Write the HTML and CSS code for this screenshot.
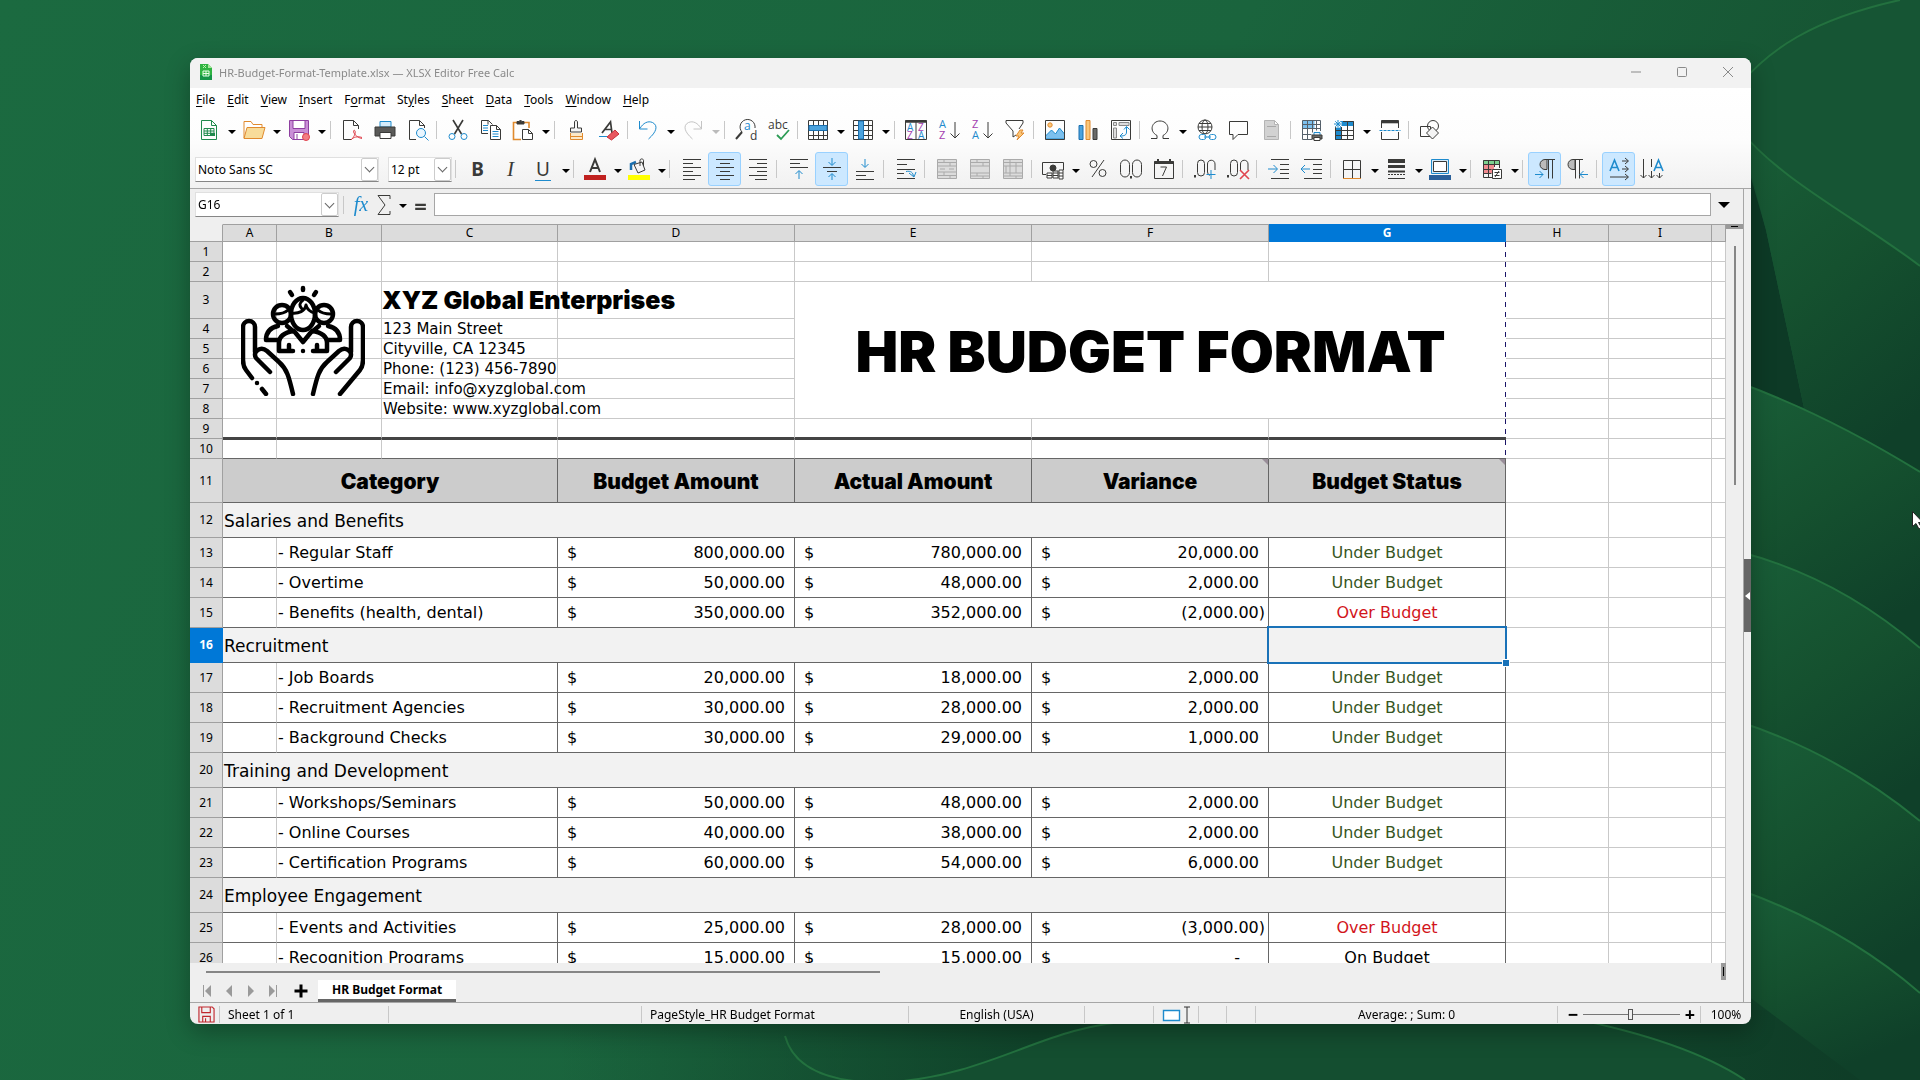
FILE: index.html
```html
<!DOCTYPE html>
<html lang="en">
<head>
  <meta charset="UTF-8" />
  <meta name="viewport" content="width=device-width, initial-scale=1" />
  <title>HR-Budget-Format-Template.xlsx — XLSX Editor Free Calc</title>
  <link rel="stylesheet" href="styles.css">
</head>
<body>
  <svg class="wallpaper" viewBox="0 0 1920 1080" preserveAspectRatio="xMaxYMax slice" aria-hidden="true">
    <defs>
      <linearGradient id="base" x1="0" y1="0" x2="1" y2="0.3"><stop offset="0" stop-color="#1b6a40"/><stop offset="0.6" stop-color="#1a643d"/><stop offset="1" stop-color="#155030"/></linearGradient>
      <linearGradient id="leaf" x1="0" y1="0" x2="0.4" y2="1"><stop offset="0" stop-color="#195e38"/><stop offset="0.5" stop-color="#15512f"/><stop offset="1" stop-color="#0f4029"/></linearGradient>
      <linearGradient id="floor" x1="0" y1="0" x2="1" y2="0"><stop offset="0" stop-color="#10432a" stop-opacity="0"/><stop offset="0.35" stop-color="#10432a"/><stop offset="0.6" stop-color="#134a2e"/><stop offset="1" stop-color="#0e3b26"/></linearGradient>
    </defs>
    <rect width="1920" height="1080" fill="url(#base)"/>
    <path d="M560 1080V1000H1920V1080Z" fill="url(#floor)"/>
    <path d="M1700 130C1751 60 1810 20 1900 0H1920V600H1700Z" fill="#165534"/>
    <path d="M1740 140L1766 230L1804 408L1740 387Z" fill="#0d3a26"/>
    <path d="M1740 130C1780 180 1860 220 1920 266V500L1804 408L1766 230Z" fill="url(#leaf)"/>
    <path d="M1740 383C1800 405 1860 435 1920 472V670H1740Z" fill="url(#leaf)"/>
    <path d="M1740 552C1810 570 1870 605 1920 648V850H1740Z" fill="url(#leaf)"/>
    <path d="M1740 722C1810 745 1870 780 1920 821V1010H1740Z" fill="url(#leaf)"/>
    <path d="M1740 890C1810 915 1870 950 1920 993V1080H1860L1740 990Z" fill="url(#leaf)"/>
    <path d="M870 1082C900 1082 930 1078 960 1070C1030 1050 1060 1026 1140 1020H1570C1630 1030 1700 1050 1745 1080Z" fill="#144e30"/>
    <g fill="none" stroke="#23713f" stroke-width="2">
      <path d="M1740 84C1770 50 1810 20 1900 0"/>
      <path d="M1740 130C1780 180 1860 220 1920 266"/>
      <path d="M1740 383C1800 405 1860 435 1920 472"/>
      <path d="M1740 552C1810 570 1870 605 1920 648"/>
      <path d="M1740 722C1810 745 1870 780 1920 821"/>
      <path d="M1740 890C1810 915 1870 950 1920 993"/>
      <path d="M785 1036C800 1090 890 1090 960 1070C1030 1050 1060 1026 1140 1020"/>
      <path d="M1570 1018C1630 1030 1700 1050 1745 1080"/>
    </g>
  </svg>

  <main class="window">
    <header class="titlebar">
      <svg class="app-icon" viewBox="0 0 14 18"><path d="M1 1h8l4 4v12H1z" fill="#2fb341"/><path d="M9 1l4 4H9z" fill="#a6e99a"/><path d="M1 12h12v5H1z" fill="#159447"/><path d="M4 8h6v5H4zM7 8v5M4 10.500h6" fill="none" stroke="#e8ffe8"/><path d="M4 2l3 3M7 2l-3 3" stroke="#b8f5a8"/></svg>
      <span class="title">HR-Budget-Format-Template.xlsx — XLSX Editor Free Calc</span>
      <div class="win-buttons">
        <button aria-label="Minimize"><svg viewBox="0 0 12 12"><path d="M1 6h10"/></svg></button>
        <button aria-label="Maximize"><svg viewBox="0 0 12 12"><rect x="1.500" y="1.500" width="9" height="9" rx="1"/></svg></button>
        <button aria-label="Close"><svg viewBox="0 0 12 12"><path d="M1 1l10 10M11 1L1 11"/></svg></button>
      </div>
    </header>

    <div class="bars">
      <nav class="menubar">
        <button><u>F</u>ile</button><button><u>E</u>dit</button><button><u>V</u>iew</button><button><u>I</u>nsert</button><button>F<u>o</u>rmat</button><button>St<u>y</u>les</button><button><u>S</u>heet</button><button><u>D</u>ata</button><button><u>T</u>ools</button><button><u>W</u>indow</button><button><u>H</u>elp</button>
      </nav>

      <!-- Standard toolbar -->
      <div class="toolbar standard">
        <button class="tool split" aria-label="New"><svg viewBox="0 0 22 22"><g stroke="#1f8a4c"><path d="M3.500 1.500h10l5 5v14h-15z"/><path d="M13.500 1.500v5h5"/><path d="M6 9.500h10v7H6zM6 12h10M6 14.300h10M9.300 9.500v7M12.700 9.500v7"/></g><path d="M12 14h5v3h-5z" fill="#1f8a4c" stroke="none"/></svg><i class="caret"></i></button>
        <button class="tool split" aria-label="Open"><svg viewBox="0 0 22 22"><path d="M1 19V2.500h7l2 3h9v3" stroke="#e08a2e" fill="#fff"/><path d="M1 19.500L4 8.500h18l-3 11z" fill="#f8dc9a" stroke="#e08a2e"/></svg><i class="caret"></i></button>
        <button class="tool split" aria-label="Save"><svg viewBox="0 0 22 22"><path d="M1.500 1.500h19v19h-16l-3-3z" fill="#c98fd6" stroke="#8e3fa0"/><path d="M5 1.500h12v8H5z" fill="#fff" stroke="#8e3fa0"/><path d="M6 13.500h10v7H6zM9 15v5" fill="#fff" stroke="#8e3fa0"/><circle cx="18" cy="18" r="3.500" fill="#f27d85" stroke="#e0444e"/></svg><i class="caret"></i></button>
        <span class="sep"></span>
        <button class="tool" aria-label="Export as PDF"><svg viewBox="0 0 22 22"><path d="M10 20.500H2.500v-19h10l5 5V10M12.500 1.500v5h5"/><path d="M10 21c3-3 5-7 4-9s-2 0-1 2 4 5 8 5.500M10 21c2-3 7-4 11-2.500" stroke="#e0444e"/></svg></button>
        <button class="tool" aria-label="Print"><svg viewBox="0 0 22 22"><path d="M6 2.500h11V8H6z" fill="#d4ebfa" stroke="#1e8bcd"/><path d="M1 8h20v9H1z" fill="#5a5a58" stroke="#3a3a38"/><path d="M6 13.500h11v6H6z" fill="#fff"/></svg></button>
        <button class="tool" aria-label="Print Preview"><svg viewBox="0 0 22 22"><path d="M9 20.500H2.500v-19h10l5 5V9M12.500 1.500v5h5"/><circle cx="14" cy="14" r="4.500" fill="#e9f6ff" stroke="#1e8bcd"/><path d="M17.500 17.500l4 4" stroke="#1e8bcd"/></svg></button>
        <span class="sep"></span>
        <button class="tool" aria-label="Cut"><svg viewBox="0 0 22 22"><path d="M6 1l8.500 14M16 1L7.500 15" stroke-width="1.600"/><circle cx="5" cy="17.500" r="3" stroke="#1e8bcd"/><circle cx="17" cy="17.500" r="3" stroke="#1e8bcd"/></svg></button>
        <button class="tool" aria-label="Copy"><svg viewBox="0 0 22 22"><path d="M8 14.500H1.500v-13h7l4 4M8 1.500v4"/><path d="M3 6.500h5M3 9h5M3 11.500h5" stroke="#1e8bcd"/><path d="M10.500 6.500h6l4 4v10h-10zM16.500 6.500v4h4" fill="#fff"/><path d="M12.500 12.500h6M12.500 15h6M12.500 17.500h6" stroke="#1e8bcd"/></svg></button>
        <button class="tool split" aria-label="Paste"><svg viewBox="0 0 22 22"><path d="M9 20.500H1.500v-17H5M12 3.500h5V9" stroke="#e08a2e" stroke-width="1.600"/><path d="M5 5V2.500h2L8.500 1 10 2.500h2V5z" fill="#3a3a38"/><path d="M10.500 10.500h6l4 4v6h-10zM16.500 10.500v4h4" fill="#fff"/></svg><i class="caret"></i></button>
        <span class="sep"></span>
        <button class="tool" aria-label="Clone Formatting"><svg viewBox="0 0 22 22"><path d="M9.500 9V3c0-2 3-2 3 0v6h4v4h-11V9z" fill="#f5f5f5"/><path d="M5.500 14v6.500h12V14" fill="#fde9c8" stroke="#e08a2e"/><path d="M5.500 17.500h12" stroke="#e08a2e"/></svg></button>
        <button class="tool" aria-label="Clear Formatting"><svg viewBox="0 0 22 22"><path d="M4 14L12.500 3 14 14M7 10.500h6.500" stroke-width="1.700"/><path d="M1 17.500h8" stroke="#1e8bcd"/><path d="M9 18l8-7 4 4-7.500 6z" fill="#e8575f" stroke="#c9333c"/></svg></button>
        <span class="sep"></span>
        <button class="tool split" aria-label="Undo"><svg viewBox="0 0 22 22"><path d="M2.500 2v8h8M3 9.500C6 4 11 1.500 15.500 3.500c6 3 4 9.500-4 16.500" stroke="#1e8bcd"/></svg><i class="caret"></i></button>
        <button class="tool split" disabled aria-label="Redo"><svg viewBox="0 0 22 22"><path d="M19.500 2v8h-8M19 9.500C16 4 11 1.500 6.500 3.500c-6 3-4 9.500 4 16.500" stroke="#c4c4c4"/></svg><i class="caret"></i></button>
        <span class="sep"></span>
        <button class="tool" aria-label="Find and Replace"><svg viewBox="0 0 22 22"><path d="M7 13A7.500 7.500 0 1 1 20 9"/><path d="M7 13l-6 7" stroke-width="2"/><text x="9" y="11" class="glyph blue">a</text><text x="15" y="21" class="glyph">d</text></svg></button>
        <button class="tool" aria-label="Spelling"><svg viewBox="0 0 22 22"><text x="0" y="10" class="glyph">abc</text><path d="M9 16l4 4 8-9" stroke="#2c9c55" stroke-width="1.800"/></svg></button>
        <span class="sep"></span>
        <button class="tool split" aria-label="Row"><svg viewBox="0 0 22 22"><path d="M1.500 1.500h19v19h-19zM1.500 6.500h19M1.500 11.500h19M1.500 16.500h19M6.500 1.500v19M11.500 1.500v19M16.500 1.500v19"/><path d="M2 6.500h18v5H2z" fill="#4ba3de" stroke="#1b6fae"/></svg><i class="caret"></i></button>
        <button class="tool split" aria-label="Column"><svg viewBox="0 0 22 22"><path d="M1.500 1.500h19v19h-19zM1.500 6.500h19M1.500 11.500h19M1.500 16.500h19M6.500 1.500v19M11.500 1.500v19M16.500 1.500v19"/><path d="M6.500 2h5v18h-5z" fill="#4ba3de" stroke="#1b6fae"/></svg><i class="caret"></i></button>
        <span class="sep"></span>
        <button class="tool" aria-label="Sort"><svg viewBox="0 0 22 22"><path d="M.5 1.500h21v19H.5zM11 2v18"/><path d="M.5 2.500h21" stroke-width="2.500"/><text x="2" y="12" class="mini blue">A</text><text x="2" y="20" class="mini purple">Z</text><text x="13" y="12" class="mini purple">Z</text><text x="13" y="20" class="mini blue">A</text></svg></button>
        <button class="tool" aria-label="Sort Ascending"><svg viewBox="0 0 22 22"><text x="1" y="9" class="small blue">A</text><text x="1" y="20" class="small purple">Z</text><path d="M17 3v16M12.500 14.500L17 19l4.500-4.500"/></svg></button>
        <button class="tool" aria-label="Sort Descending"><svg viewBox="0 0 22 22"><text x="1" y="9" class="small purple">Z</text><text x="1" y="20" class="small blue">A</text><path d="M17 3v16M12.500 14.500L17 19l4.500-4.500"/></svg></button>
        <button class="tool" aria-label="AutoFilter"><svg viewBox="0 0 22 22"><path d="M9 18v-6L2 4V1.500h17V4l-4 6M9 18l3-2"/><path d="M16 11l-4 6h3l-2 4 7-7h-3l2-3z" fill="#fbc77a" stroke="#e08a2e"/></svg></button>
        <span class="sep"></span>
        <button class="tool" aria-label="Insert Image"><svg viewBox="0 0 22 22"><path d="M1.500 20V17l6-6 4 4 4-6 5 6v5z" fill="#7cc0ee" stroke="#1e8bcd"/><circle cx="6" cy="6" r="2.200" fill="#fbc77a" stroke="#e08a2e"/><path d="M1.500 1.500h19v19h-19z"/></svg></button>
        <button class="tool" aria-label="Insert Chart"><svg viewBox="0 0 22 22"><path d="M2 6.500h4v14H2z" fill="#4ba3de" stroke="#1b6fae"/><path d="M9 1.500h4v19H9z" fill="#fbc77a" stroke="#e08a2e"/><path d="M16 9.500h4v11h-4z" fill="#6a6a68"/></svg></button>
        <button class="tool" aria-label="Pivot Table"><svg viewBox="0 0 22 22"><path d="M1.500 1.500h19v19h-19z"/><path d="M3.500 3.500h3v3h-3zM9 3.500h10v3H9zM3.500 9h3v10h-3z" fill="#ddd" stroke="#888"/><path d="M16.500 8v5c0 3-2 4-6 4M14 10.500l2.500-3 3 3M13 14l-3 3 3 2.500" stroke="#1e8bcd"/></svg></button>
        <span class="sep"></span>
        <button class="tool split" aria-label="Special Character"><svg viewBox="0 0 22 22"><path d="M2 19.500h6v-3C-.5 12 3 2 11 2s11.500 10 3 14.500v3h6"/></svg><i class="caret"></i></button>
        <button class="tool" aria-label="Hyperlink"><svg viewBox="0 0 22 22"><circle cx="10" cy="8" r="7"/><ellipse cx="10" cy="8" rx="3" ry="7"/><path d="M3 8h14M4 4.500h12M4 11.500h12"/><path d="M4 15.500h15v5H4z" fill="#fff" stroke="none"/><rect x="4" y="15.500" width="7" height="5" rx="2.500" stroke="#1e8bcd"/><rect x="14" y="15.500" width="7" height="5" rx="2.500" stroke="#1e8bcd"/><path d="M9 18h7" stroke="#1e8bcd"/></svg></button>
        <button class="tool" aria-label="Comment"><svg viewBox="0 0 22 22"><path d="M1.500 2.500h18v13H10l-5 5v-5H1.500z"/></svg></button>
        <button class="tool" disabled aria-label="Headers and Footers"><svg viewBox="0 0 22 22"><path d="M3.500 1.500h10l4 4v15h-14zM13.500 1.500v4h4" fill="#d2d2d2" stroke="#b4b4b4"/><path d="M6 7.500h9M6 17.500h9" stroke="#a8a8a8"/></svg></button>
        <span class="sep"></span>
        <button class="tool" aria-label="Define Print Area"><svg viewBox="0 0 22 22"><path d="M1.500 1.500h12v8h-12z" fill="#7cc0ee" stroke="none"/><path d="M11 20.500H1.500v-19h18V12M1.500 5.500h18M1.500 9.500h18M1.500 15.500h9M6.500 1.500v19M11.500 1.500v12M15.500 1.500v10" stroke="#55606a"/><path d="M13 13.500h6v3h-6z" fill="#e9f6ff" stroke="#1e8bcd"/><path d="M11 16h10v4H11z" fill="#6a6a68"/><path d="M13 18.500h6v3h-6z" fill="#fff"/></svg></button>
        <button class="tool split" aria-label="Freeze"><svg viewBox="0 0 22 22"><path d="M2 2h19v5H8v14H2z" fill="#1e8bcd" stroke="none"/><path d="M2.500 7v13.500h18v-18H10M2.500 11.500h18M2.500 16.500h18M8.500 8v13M14.500 2.500V21"/><path d="M5 1v8M1 5h8M2.300 2.300l5.500 5.500M7.800 2.300L2.300 7.800" stroke="#fff" stroke-width="2.500"/><path d="M5 1v8M1 5h8M2.300 2.300l5.500 5.500M7.800 2.300L2.300 7.800" stroke="#1e8bcd"/></svg><i class="caret"></i></button>
        <button class="tool" aria-label="Split Window"><svg viewBox="0 0 22 22"><path d="M2.500 9V1.500h17V9M2.500 13v7.500h17V13"/><path d="M2.500 3h17" stroke-width="2.600"/><path d="M.5 11.500h21" stroke="#1e8bcd" stroke-dasharray="3 1"/></svg></button>
        <span class="sep"></span>
        <button class="tool" aria-label="Show Draw Functions"><svg viewBox="0 0 22 22"><circle cx="14" cy="7" r="5.500"/><path d="M1.500 7.500h10v10h-10z"/><path d="M13.500 8l6 6-6 6-6-6z" fill="#f4f4f4"/></svg></button>
      </div>

      <!-- Formatting toolbar -->
      <div class="toolbar formatting">
        <label class="combo font-name"><select aria-label="Font Name"><option>Noto Sans SC</option></select><span class="drop"></span></label>
        <label class="combo font-size"><select aria-label="Font Size"><option>12 pt</option></select><span class="drop"></span></label>
        <span class="sep"></span>
        <button class="tool letter bold">B</button>
        <button class="tool letter italic">I</button>
        <button class="tool split letter underline" aria-label="Underline"><span>U</span><i class="caret"></i></button>
        <span class="sep"></span>
        <button class="tool split" aria-label="Font Color"><svg viewBox="0 0 22 22"><path d="M6 14L11 1.500 16 14M7.500 10h7" stroke-width="2"/><path d="M0 19.500h22" stroke="#c0211f" stroke-width="5"/></svg><i class="caret"></i></button>
        <button class="tool split" aria-label="Background Color"><svg viewBox="0 0 22 22"><path d="M3 12V6l5-2" stroke="#1b6fae" stroke-width="2.500"/><path d="M6 6.500l8-2.500 3 8-7 3zM12 8V2c1-2 4-1 3.500 1V8"/><path d="M0 19.500h22" stroke="#ffff00" stroke-width="5"/></svg><i class="caret"></i></button>
        <span class="sep"></span>
        <button class="tool" aria-label="Align Left"><svg viewBox="0 0 22 22"><path d="M2 1.500h18M2 5.500h10M2 9.500h18M2 13.500h10M2 17.500h18M2 21.500h12"/></svg></button>
        <button class="tool on" aria-label="Center Horizontally"><svg viewBox="0 0 22 22"><path d="M2 1.500h18M6 5.500h10M2 9.500h18M6 13.500h10M2 17.500h18M6 21.500h10"/></svg></button>
        <button class="tool" aria-label="Align Right"><svg viewBox="0 0 22 22"><path d="M2 1.500h18M10 5.500h10M2 9.500h18M10 13.500h10M2 17.500h18M8 21.500h12"/></svg></button>
        <span class="sep"></span>
        <button class="tool" aria-label="Align Top"><svg viewBox="0 0 22 22"><path d="M2 1.500h18M2 5.500h10M2 9.500h18"/><path d="M11 21v-8M7.500 16l3.500-3.500 3.500 3.500" stroke="#1e8bcd"/></svg></button>
        <button class="tool on" aria-label="Center Vertically"><svg viewBox="0 0 22 22"><path d="M2 9.500h18M6 13.500h10"/><path d="M11 0v7M7.500 4L11 7.500 14.500 4M11 22v-6M7.500 19L11 15.500l3.500 3.500" stroke="#1e8bcd"/></svg></button>
        <button class="tool" aria-label="Align Bottom"><svg viewBox="0 0 22 22"><path d="M2 13.500h18M2 17.500h10M2 21.500h18"/><path d="M11 1v8M7.500 6L11 9.500 14.500 6" stroke="#1e8bcd"/></svg></button>
        <span class="sep"></span>
        <button class="tool" aria-label="Wrap Text"><svg viewBox="0 0 22 22"><path d="M2 1.500h18M2 6.500h10M2 11.500h18M2 15.500h7M2 20.500h18"/><path d="M11 13.500c5-1 7 1 7.500 5M14 15l5 4 2-5" stroke="#1e8bcd"/></svg></button>
        <span class="sep"></span>
        <button class="tool" disabled aria-label="Merge and Center"><svg viewBox="0 0 22 22"><path d="M1.500 1.500h19v19h-19z" fill="#dcdcdc" stroke="#aaa"/><path d="M1.500 4.500h19M1.500 8h19M1.500 14h19M1.500 17.500h19M8 1.500v3M14 4.500V8M8 14v3M14 17v3M4 11h5M13 11h5" stroke="#aaa"/></svg></button>
        <button class="tool" disabled aria-label="Merge Cells"><svg viewBox="0 0 22 22"><path d="M1.500 1.500h19v19h-19z" fill="#dcdcdc" stroke="#aaa"/><path d="M1.500 4.500h19M1.500 8h19M1.500 15h19M1.500 18h19M8 1.500V5M14 4.500V8M8 15v3M14 18v3" stroke="#aaa"/></svg></button>
        <button class="tool" disabled aria-label="Split Cells"><svg viewBox="0 0 22 22"><path d="M1.500 1.500h19v19h-19z" fill="#dcdcdc" stroke="#aaa"/><path d="M1.500 4.500h19M1.500 8h19M1.500 15h19M1.500 18h19M8 1.500V15M14 4.500V15M8 15v3M14 18v3M4 8v7" stroke="#aaa"/></svg></button>
        <span class="sep"></span>
        <button class="tool split" aria-label="Format as Currency"><svg viewBox="0 0 22 22"><path d="M4 16.500H.500v-12h21V12"/><circle cx="11" cy="10" r="3" fill="#3a3a38"/><path d="M5 15h5v5H5zM5 17.500h5M11 13h5v7h-5zM11 15h5M11 17.500h5M17 12h4v9h-4zM17 15h4M17 18h4" fill="#fff"/></svg><i class="caret"></i></button>
        <button class="tool" aria-label="Format as Percent"><svg viewBox="0 0 22 22"><circle cx="6.500" cy="6" r="3.500"/><circle cx="15.500" cy="15" r="3.500"/><path d="M17 2L5 19"/></svg></button>
        <button class="tool" aria-label="Format as Number"><svg viewBox="0 0 22 22"><rect x="0.500" y="2" width="9" height="17" rx="4.500"/><rect x="12.500" y="2" width="9" height="17" rx="4.500"/><path d="M11 18v2.500" stroke-width="2"/></svg></button>
        <button class="tool" aria-label="Format as Date"><svg viewBox="0 0 22 22"><path d="M1.500 3.500h19v17h-19z"/><path d="M1.500 4.500h19" stroke-width="3"/><path d="M5 1v3M17 1v3" stroke-width="2"/><path d="M7.500 9h6l-4 9"/></svg></button>
        <span class="sep"></span>
        <button class="tool" aria-label="Add Decimal Place"><svg viewBox="0 0 22 22"><path d="M1 17v2.500" stroke-width="2"/><rect x="3.500" y="2" width="7" height="16" rx="3.500"/><path d="M13.500 14V6c0-5 7.500-5 7.500 0v6M13.500 14q.5 3 2 3.500"/><path d="M17 12v9M12.500 16.500h9" stroke="#1e8bcd"/></svg></button>
        <button class="tool" aria-label="Delete Decimal Place"><svg viewBox="0 0 22 22"><path d="M1 17v2.500" stroke-width="2"/><rect x="3.500" y="2" width="7" height="16" rx="3.500"/><path d="M13.500 12V6c0-5 7.500-5 7.500 0v6"/><path d="M13 12l9 9M22 12l-9 9" stroke="#e0444e" stroke-width="1.600"/></svg></button>
        <span class="sep"></span>
        <button class="tool" aria-label="Increase Indent"><svg viewBox="0 0 22 22"><path d="M3 1.500h18M12 6.500h9M12 11.500h9M12 15.500h9M3 20.500h18"/><path d="M0 11h9M5.500 7L9.500 11l-4 4" stroke="#1e8bcd"/></svg></button>
        <button class="tool" aria-label="Decrease Indent"><svg viewBox="0 0 22 22"><path d="M3 1.500h18M12 6.500h9M12 11.500h9M12 15.500h9M3 20.500h18"/><path d="M0 11h9M4 7L0 11l4 4" stroke="#1e8bcd"/></svg></button>
        <span class="sep"></span>
        <button class="tool split" aria-label="Borders"><svg viewBox="0 0 22 22"><path d="M2.500 20V2.500h17V20M11.500 2.500V20M2.500 11.500h17"/><path d="M2 20.500h18" stroke="#e08a2e"/></svg><i class="caret"></i></button>
        <button class="tool split" aria-label="Border Style"><svg viewBox="0 0 22 22"><path d="M3 3h17" stroke-width="4"/><path d="M3 8.500h17" stroke-width="3"/><path d="M3 13.500h17" stroke-width="2"/><path d="M3 16.500h17" stroke-dasharray="2 1"/><path d="M3 20.500h17"/></svg><i class="caret"></i></button>
        <button class="tool split" aria-label="Border Color"><svg viewBox="0 0 22 22"><path d="M2.500 1.500h17v14h-17z" stroke="#1e8bcd" fill="#d4ebfa"/><path d="M4.500 3.500h13v10h-13z" fill="#fff"/><path d="M0 19.500h22" stroke="#2a6099" stroke-width="5"/></svg><i class="caret"></i></button>
        <span class="sep"></span>
        <button class="tool split" aria-label="Conditional"><svg viewBox="0 0 22 22"><path d="M2 2h16v5H2z" fill="#7cd08f" stroke="none"/><path d="M2 7h11v8H2z" fill="#f08a8f" stroke="none"/><path d="M11 19.500H2.500v-17h16V10M2.500 6.500h16M2.500 11.500h8M2.500 15.500h8M7.500 2.500v17M13.500 2.500V9"/><path d="M11.500 11.500h9v9h-9z" fill="#fff"/><path d="M13.500 14.500h5M13.500 17.500h5M18 13l-4 6"/></svg><i class="caret"></i></button>
        <span class="sep"></span>
        <button class="tool on" aria-label="Left-To-Right"><svg viewBox="0 0 22 22"><path d="M13 1.500v10H11a5 5 0 0 1 0-10z" fill="#bbb"/><path d="M11 1.500h10M14.500 1.500v19M18.500 1.500v19"/><path d="M1 16.500h8M5.500 13L9 16.500 5.500 20" stroke="#1e8bcd"/></svg></button>
        <button class="tool" aria-label="Right-To-Left"><svg viewBox="0 0 22 22"><path d="M8 1.500v10H6a5 5 0 0 1 0-10z" fill="#bbb"/><path d="M6 1.500h10M8.500 1.500v19M12.500 1.500v19"/><path d="M13 16.500h8M16.500 13L13 16.500l3.500 3.500" stroke="#1e8bcd"/></svg></button>
        <span class="sep"></span>
        <button class="tool on" aria-label="Text direction left to right"><svg viewBox="0 0 22 22"><path d="M2 13L6.500 2 11 13M3.500 9.500h6" stroke="#1e8bcd" stroke-width="1.600"/><path d="M14 3h6M17 0l3.500 3L17 6M14 11h6M17 8l3.500 3-3.500 3M2 19h18M17 16l3.500 3-3.500 3"/></svg></button>
        <button class="tool" aria-label="Text direction top to bottom"><svg viewBox="0 0 22 22"><path d="M13 13L17.500 2 22 13M14.500 9.500h6" stroke="#1e8bcd" stroke-width="1.600"/><path d="M2.500 1v19M-.5 17l3 3 3-3M10.500 1v8M10.500 13v7M7.500 17l3 3 3-3M18.500 15v5M15.500 17l3 3 3-3"/></svg></button>
      </div>
    </div>

    <div class="workspace">
      <div class="document">
        <div class="formula-bar">
          <div class="combo name-box"><input type="text" value="G16" aria-label="Name Box"><button class="drop" aria-label="Cell names"></button></div>
          <span class="sep"></span>
          <button class="fx" aria-label="Function Wizard">fx</button>
          <button class="sum" aria-label="Select Function"><svg viewBox="0 0 22 22"><path d="M17 5V1.500H5l7 9.500-7 9.500h12V17"/></svg><i class="caret"></i></button>
          <button class="equals" aria-label="Formula">=</button>
          <input class="formula" type="text" aria-label="Input line">
          <button class="expand" aria-label="Expand Formula Bar"></button>
        </div>

        <div class="sheet-area">
          <div class="grid">
            <svg class="logo" viewBox="0 0 124 111" aria-hidden="true">
              <g fill="none" stroke="#000" stroke-width="4.500" stroke-linecap="round" stroke-linejoin="round">
                <path d="M62 3v2M49 7l2 3M75 7l-2 3"/>
                <ellipse cx="62" cy="29" rx="12" ry="16"/>
                <circle cx="41" cy="29" r="9"/><circle cx="83" cy="29" r="9"/>
                <path d="M34 29c6 0 10-1 13-4M90 29c-6 0-10-1-13-4" stroke-width="3"/>
                <path d="M50 28c8 1 14-2 15-8 1 4 4 7 9 8M62 15c-4 3-4 6-1 9" stroke-width="3"/>
                <path d="M37 55H25c0-10 7-13 12-14M87 55h12c0-10-7-13-12-14M46 41l6 5M78 41l-6 5"/>
                <path d="M52 66H38V58c0-8 8-11 15-12l9 11 9-11c7 1 15 4 15 12v8H72M48 60v5M76 60v5M62 66v0"/>
                <path d="M14 67V42a6 6 0 0 0-12 0v33q0 6 3 10l6 8M16 98v0M21 104l4 5"/>
                <path d="M29 87L15 73C11 66 20 61 26 66L38 77C46 84 48 92 52 109"/>
                <path d="M110 67V42a6 6 0 0 1 12 0v33q0 6-3 10l-20 24"/>
                <path d="M95 87L109 73C113 66 104 61 98 66L86 77C78 84 76 92 72 109"/>
              </g>
            </svg>
            <table class="cells">
              <colgroup><col class="c-num"><col class="c-a"><col class="c-b"><col class="c-c"><col class="c-wide"><col class="c-wide"><col class="c-wide"><col class="c-wide"><col class="c-std"><col class="c-std"><col></colgroup>
              <thead>
                <tr><th class="corner"></th><th>A</th><th>B</th><th>C</th><th>D</th><th>E</th><th>F</th><th class="current">G</th><th>H</th><th>I</th><th></th></tr>
              </thead>
              <tbody>
                <tr><th>1</th><td></td><td></td><td></td><td></td><td></td><td></td><td class="brk"></td><td></td><td></td><td></td></tr>
                <tr><th>2</th><td></td><td></td><td></td><td></td><td></td><td></td><td class="brk"></td><td></td><td></td><td></td></tr>
                <tr class="company"><th>3</th><td></td><td></td><td>XYZ Global Enterprises</td><td></td><td class="doc-title brk" colspan="3" rowspan="6">HR BUDGET FORMAT</td><td></td><td></td><td></td></tr>
                <tr class="address"><th>4</th><td></td><td></td><td>123 Main Street</td><td></td><td></td><td></td><td></td></tr>
                <tr class="address"><th>5</th><td></td><td></td><td>Cityville, CA 12345</td><td></td><td></td><td></td><td></td></tr>
                <tr class="address"><th>6</th><td></td><td></td><td>Phone: (123) 456-7890</td><td></td><td></td><td></td><td></td></tr>
                <tr class="address"><th>7</th><td></td><td></td><td>Email: info@xyzglobal.com</td><td></td><td></td><td></td><td></td></tr>
                <tr class="address"><th>8</th><td></td><td></td><td>Website: www.xyzglobal.com</td><td></td><td></td><td></td><td></td></tr>
                <tr class="above-rule"><th>9</th><td></td><td></td><td></td><td></td><td></td><td></td><td class="brk"></td><td></td><td></td><td></td></tr>
                <tr class="below-rule"><th>10</th><td></td><td></td><td></td><td></td><td></td><td></td><td class="brk"></td><td></td><td></td><td></td></tr>
                <tr class="heads"><th>11</th><td class="head" colspan="3">Category</td><td class="head">Budget Amount</td><td class="head">Actual Amount</td><td class="head mark">Variance</td><td class="head mark">Budget Status</td><td></td><td></td><td></td></tr>
                <tr class="section"><th>12</th><td class="group" colspan="7">Salaries and Benefits</td><td></td><td></td><td></td></tr>
                <tr class="item"><th>13</th><td></td><td colspan="2">- Regular Staff</td><td class="money"><span>$</span>800,000.00</td><td class="money"><span>$</span>780,000.00</td><td class="money"><span>$</span>20,000.00</td><td class="status under">Under Budget</td><td></td><td></td><td></td></tr>
                <tr class="item"><th>14</th><td></td><td colspan="2">- Overtime</td><td class="money"><span>$</span>50,000.00</td><td class="money"><span>$</span>48,000.00</td><td class="money"><span>$</span>2,000.00</td><td class="status under">Under Budget</td><td></td><td></td><td></td></tr>
                <tr class="item"><th>15</th><td></td><td colspan="2">- Benefits (health, dental)</td><td class="money"><span>$</span>350,000.00</td><td class="money"><span>$</span>352,000.00</td><td class="money negative"><span>$</span>(2,000.00)</td><td class="status over">Over Budget</td><td></td><td></td><td></td></tr>
                <tr class="section"><th class="current">16</th><td class="group" colspan="6">Recruitment</td><td class="group selected"></td><td></td><td></td><td></td></tr>
                <tr class="item"><th>17</th><td></td><td colspan="2">- Job Boards</td><td class="money"><span>$</span>20,000.00</td><td class="money"><span>$</span>18,000.00</td><td class="money"><span>$</span>2,000.00</td><td class="status under">Under Budget</td><td></td><td></td><td></td></tr>
                <tr class="item"><th>18</th><td></td><td colspan="2">- Recruitment Agencies</td><td class="money"><span>$</span>30,000.00</td><td class="money"><span>$</span>28,000.00</td><td class="money"><span>$</span>2,000.00</td><td class="status under">Under Budget</td><td></td><td></td><td></td></tr>
                <tr class="item"><th>19</th><td></td><td colspan="2">- Background Checks</td><td class="money"><span>$</span>30,000.00</td><td class="money"><span>$</span>29,000.00</td><td class="money"><span>$</span>1,000.00</td><td class="status under">Under Budget</td><td></td><td></td><td></td></tr>
                <tr class="section"><th>20</th><td class="group" colspan="7">Training and Development</td><td></td><td></td><td></td></tr>
                <tr class="item"><th>21</th><td></td><td colspan="2">- Workshops/Seminars</td><td class="money"><span>$</span>50,000.00</td><td class="money"><span>$</span>48,000.00</td><td class="money"><span>$</span>2,000.00</td><td class="status under">Under Budget</td><td></td><td></td><td></td></tr>
                <tr class="item"><th>22</th><td></td><td colspan="2">- Online Courses</td><td class="money"><span>$</span>40,000.00</td><td class="money"><span>$</span>38,000.00</td><td class="money"><span>$</span>2,000.00</td><td class="status under">Under Budget</td><td></td><td></td><td></td></tr>
                <tr class="item"><th>23</th><td></td><td colspan="2">- Certification Programs</td><td class="money"><span>$</span>60,000.00</td><td class="money"><span>$</span>54,000.00</td><td class="money"><span>$</span>6,000.00</td><td class="status under">Under Budget</td><td></td><td></td><td></td></tr>
                <tr class="section"><th>24</th><td class="group" colspan="7">Employee Engagement</td><td></td><td></td><td></td></tr>
                <tr class="item"><th>25</th><td></td><td colspan="2">- Events and Activities</td><td class="money"><span>$</span>25,000.00</td><td class="money"><span>$</span>28,000.00</td><td class="money negative"><span>$</span>(3,000.00)</td><td class="status over">Over Budget</td><td></td><td></td><td></td></tr>
                <tr class="item"><th>26</th><td></td><td colspan="2">- Recognition Programs</td><td class="money"><span>$</span>15,000.00</td><td class="money"><span>$</span>15,000.00</td><td class="money zero"><span>$</span>-</td><td class="status">On Budget</td><td></td><td></td><td></td></tr>
              </tbody>
            </table>
          </div>
          <div class="vscroll"><span class="split-knob"></span><span class="thumb"></span></div>
        </div>

        <div class="hscroll"><span class="thumb"></span><span class="split-knob"></span></div>

        <div class="tabs">
          <button class="nav" aria-label="First sheet"><svg viewBox="0 0 10 14"><path d="M1.500 1v12" stroke="#9a9a9a"/><path d="M9 1v12L3 7z"/></svg></button>
          <button class="nav" aria-label="Previous sheet"><svg viewBox="0 0 10 14"><path d="M8 1v12L2 7z"/></svg></button>
          <button class="nav" aria-label="Next sheet"><svg viewBox="0 0 10 14"><path d="M2 1v12l6-6z"/></svg></button>
          <button class="nav" aria-label="Last sheet"><svg viewBox="0 0 10 14"><path d="M8.500 1v12" stroke="#9a9a9a"/><path d="M1 1v12l6-6z"/></svg></button>
          <button class="nav add" aria-label="Add sheet"><svg viewBox="0 0 14 14"><path d="M7 0.500v13M0.500 7h13" stroke="#000" stroke-width="3"/></svg></button>
          <button class="tab">HR Budget Format</button>
        </div>
      </div>
      <aside class="sidebar"><button aria-label="Show sidebar"><svg viewBox="0 0 5 8"><path d="M5 0v8L0 4z" fill="#fff"/></svg></button></aside>
    </div>

    <footer class="statusbar">
      <span><svg class="doc-state" viewBox="0 0 18 18"><path d="M1 1h14l2 2v14H1zM4 1v6h9V1M5 17v-6h8v6M8 13v4" fill="none" stroke="#c0272d" stroke-width="1.200"/></svg></span>
      <span>Sheet 1 of 1</span>
      <span></span>
      <span>PageStyle_HR Budget Format</span>
      <span class="mid">English (USA)</span>
      <span></span>
      <span class="mode"><svg viewBox="0 0 30 18"><path d="M1.500 4.500h16v10h-16z" fill="#fff" stroke="#1e8bcd" stroke-width="1.400"/><path d="M22 1h6M25 1v16M22 17h6" fill="none" stroke="#333"/></svg></span>
      <span></span>
      <span></span>
      <span class="mid">Average: ; Sum: 0</span>
      <span class="zoom"><button aria-label="Zoom out">−</button><input type="range" min="0" max="200" value="98" aria-label="Zoom"><button aria-label="Zoom in">+</button></span>
      <span class="mid">100%</span>
    </footer>
  </main>

  <svg class="pointer" viewBox="0 0 8 18" aria-hidden="true"><path d="M.5 .500v15l3.500-3 3 5.500 2.500-1.500-3-5H11z" fill="#fff" stroke="#222"/></svg>
</body>
</html>
```

FILE: styles.css
```css
* {
  box-sizing: border-box;
}
body {
  margin: 0;
  height: 100vh;
  padding: 58px 169px 56px 190px;
  background: #1a643d;
  overflow: hidden;
  font-family: "Noto Sans", "Open Sans", sans-serif;
  font-size: 12px;
  color: #000;
}
button,
input,
select {
  font: inherit;
  color: inherit;
  border: 0;
  padding: 0;
  margin: 0;
  background: none;
  outline: none;
}
svg {
  display: block;
}

/* Desktop */
.wallpaper {
  position: fixed;
  inset: 0;
  width: 100%;
  height: 100%;
  z-index: -1;
}
.pointer {
  position: fixed;
  right: 0;
  top: 511px;
  width: 8px;
  height: 18px;
}

/* Window frame */
.window {
  height: 100%;
  display: flex;
  flex-direction: column;
  background: #efefef;
  border-radius: 8px;
  overflow: hidden;
  box-shadow: 0 8px 24px rgba(0, 0, 0, 0.3);
}
.titlebar {
  flex: none;
  height: 30px;
  display: flex;
  align-items: center;
  padding: 0 0 2px 9px;
  background: #f2f2f2;
  color: #8a8a8a;
  font-size: 11px;
}
.app-icon {
  width: 14px;
  height: 18px;
  margin-right: 6px;
}
.win-buttons {
  margin-left: auto;
  display: flex;
}
.win-buttons button {
  width: 46px;
  height: 28px;
  display: grid;
  place-items: center;
}
.win-buttons svg {
  width: 12px;
  height: 12px;
  fill: none;
  stroke: #8a8a8a;
}

/* Menu and toolbars */
.bars {
  flex: none;
  background: linear-gradient(#fff, #fdfdfd 50%, #f1f1f1);
  border-bottom: 1px solid #a6a6a6;
}
.menubar {
  display: flex;
  height: 24px;
  align-items: center;
  gap: 12px;
  padding: 0 0 2px 6px;
}
.menubar u {
  text-underline-offset: 2px;
}
.toolbar {
  display: flex;
  align-items: center;
}
.standard {
  height: 36px;
  padding-left: 3px;
}
.formatting {
  height: 40px;
  padding: 3px 0 1px 5px;
}
.tool {
  flex: none;
  width: 33px;
  height: 34px;
  display: flex;
  align-items: center;
  justify-content: center;
  border-radius: 3px;
}
.tool svg,
.sum svg {
  width: 22px;
  height: 22px;
  overflow: visible;
  fill: none;
  stroke: #3a3a38;
  stroke-width: 1;
}
.split {
  width: 45px;
  padding-left: 5px;
  justify-content: flex-start;
}
.formatting .split {
  width: 44px;
}
.caret {
  margin-left: 8px;
  margin-top: 3px;
  border: 4px solid transparent;
  border-top: 4px solid #000;
  border-bottom: 0;
}
.tool:disabled .caret {
  border-top-color: #bbb;
}
.on {
  background: #cce8ff;
  border: 1px solid #99d1ff;
}
.sep {
  flex: none;
  width: 1px;
  height: 18px;
  margin-left: 2px;
  margin-right: 5px;
  background: #c8c8c8;
}
.standard .sep {
  margin-right: 4px;
}
svg text {
  stroke: none;
  fill: #3a3a38;
  font-family: "Open Sans", sans-serif;
}
svg .glyph {
  font-size: 12px;
}
svg .small {
  font-size: 11px;
}
svg .mini {
  font-size: 10px;
}
svg .blue {
  fill: #1e8bcd;
}
svg .purple {
  fill: #a33fb0;
}
.letter {
  font-size: 19px;
  color: #3a3a38;
}
.bold {
  font-weight: 700;
}
.italic {
  font-family: "Liberation Serif", serif;
  font-style: italic;
  font-size: 21px;
}
.underline span {
  width: 16px;
  line-height: 22px;
  margin: 0 3px;
  border-bottom: 1px solid #1e8bcd;
}

/* Combo boxes */
.combo {
  display: flex;
  height: 25px;
  background: #fff;
  border: 1px solid #e0e0e0;
  border-bottom-color: #868686;
}
.combo select,
.combo input {
  flex: 1;
  min-width: 0;
  appearance: none;
  padding-left: 2px;
}
.drop {
  flex: none;
  width: 17px;
  display: grid;
  place-items: center;
  border: 1px solid #ccc;
  border-radius: 2px;
}
.drop::after {
  content: "";
  width: 6px;
  height: 6px;
  margin-bottom: 3px;
  border: solid #666;
  border-width: 0 1px 1px 0;
  transform: rotate(45deg);
}
.font-name {
  width: 184px;
  margin-right: 9px;
}
.font-size {
  width: 64px;
  margin-right: 1px;
}
.name-box {
  width: 144px;
}

/* Workspace */
.workspace {
  flex: 1;
  min-height: 0;
  display: flex;
}
.document {
  flex: 1;
  min-width: 0;
  display: flex;
  flex-direction: column;
}
.formula-bar {
  flex: none;
  height: 35px;
  padding: 0 13px 4px 5px;
  display: flex;
  align-items: center;
}
.formula-bar .sep {
  margin: 0 5px 0 4px;
}
.fx {
  width: 24px;
  font-family: "Liberation Serif", serif;
  font-style: italic;
  font-size: 20px;
  color: #1e8bcd;
}
.sum {
  display: flex;
  align-items: center;
}
.sum .caret {
  margin-left: 4px;
}
.equals {
  width: 27px;
  font-size: 22px;
  font-weight: 700;
  line-height: 22px;
  color: #3a3a38;
}
.formula {
  flex: 1;
  height: 23px;
  background: #fff;
  border: 1px solid #a6a6a6;
}
.expand {
  margin-left: 7px;
  border: 6px solid transparent;
  border-top-color: #000;
  border-bottom: 0;
}
.sheet-area {
  flex: 1;
  min-height: 0;
  display: flex;
}
.grid {
  position: relative;
  flex: 1;
  min-width: 0;
  overflow: hidden;
}
.logo {
  position: absolute;
  left: 51px;
  top: 61px;
  width: 124px;
  height: 111px;
}

/* Cells */
.cells {
  width: 100%;
  table-layout: fixed;
  border-spacing: 0;
  background: #fff;
}
.c-num { width: 33px; }
.c-a { width: 54px; }
.c-b { width: 105px; }
.c-c { width: 176px; }
.c-wide { width: 237px; }
.c-std { width: 103px; }
.cells th {
  height: 20px;
  padding: 0;
  font-weight: 400;
  line-height: 16px;
  background: #dcdcdc;
  border-right: 1px solid #a0a0a0;
  border-bottom: 1px solid #a0a0a0;
}
.cells thead th {
  height: 18px;
  line-height: 14px;
  border-top: 1px solid #a0a0a0;
}
.cells th.corner {
  background: #efefef;
  border-top-color: #efefef;
}
.cells th.current {
  background: #0078d7;
  border-color: #0078d7;
  color: #fff;
  font-weight: 700;
}
.cells td {
  padding: 0;
  line-height: 18px;
  white-space: nowrap;
  border-right: 1px solid #c9c9c9;
  border-bottom: 1px solid #c9c9c9;
}
.cells td.brk {
  border-right: 0;
  background: repeating-linear-gradient(#1a1466 0 5px, #fff 5px 10px) right / 1px 100% no-repeat;
}
.company th {
  height: 37px;
}
.company td,
.cells .head {
  font: 900 25px "Inter", sans-serif;
  font-optical-sizing: none;
}
.cells .doc-title {
  font-size: 57px;
  line-height: 60px;
  padding-top: 4px;
  text-align: center;
}
.address td {
  font-family: "DejaVu Sans", sans-serif;
  font-size: 15px;
  padding-left: 1px;
}
.above-rule td:nth-child(-n+8) {
  border-bottom: 2px solid #444;
}
.below-rule td:nth-child(-n+8) {
  border-top: 1px solid #444;
  border-bottom-color: #666;
}
.heads th {
  height: 44px;
}
.cells .head {
  position: relative;
  background: #ccc;
  border-color: #666;
  text-align: center;
  font-size: 21px;
  padding-top: 2px;
}
.mark::after {
  content: "";
  position: absolute;
  right: 0;
  top: 0;
  border: 3px solid #998e99;
  border-left-color: transparent;
  border-bottom-color: transparent;
}
.section th {
  height: 35px;
}
.section td,
.item td {
  font-family: "DejaVu Sans", sans-serif;
  font-size: 16px;
}
.cells .group {
  padding: 1px 0 0 1px;
  background: #f2f2f2;
  border-color: #666;
  font-size: 17px;
}
.item th {
  height: 30px;
}
.item td:nth-child(-n+7) {
  border-bottom-color: #666;
}
.item td:nth-child(3) {
  padding-left: 1px;
  border-right-color: #666;
}
.cells .money {
  padding: 0 9px;
  border-color: #666;
  text-align: right;
}
.money span {
  float: left;
}
.cells .negative {
  padding-right: 3px;
}
.cells .zero {
  padding-right: 28px;
}
.cells .status {
  border-color: #666;
  text-align: center;
}
.under {
  color: #375623;
}
.over {
  color: #d2151b;
}
.selected {
  position: relative;
}
.selected::before {
  content: "";
  position: absolute;
  inset: -2px;
  border: 2px solid #1a72b8;
}
.selected::after {
  content: "";
  position: absolute;
  right: -4px;
  bottom: -4px;
  width: 6px;
  height: 6px;
  background: #1a72b8;
  outline: 1px solid #fff;
}

/* Scrollbars */
.vscroll {
  width: 17px;
  flex: none;
  display: flex;
  flex-direction: column;
}
.vscroll .split-knob {
  height: 5px;
  box-shadow: inset 5px 0 #999, inset -5px 0 #999, inset 0 2px #999, inset 0 -2px #999;
  background: #000;
}
.vscroll .thumb {
  width: 2px;
  height: 239px;
  margin: 17px auto 0;
  background: #868686;
}
.hscroll {
  flex: none;
  height: 17px;
  display: flex;
  align-items: center;
  padding: 0 17px 0 16px;
}
.hscroll .thumb {
  width: 674px;
  height: 2px;
  background: #868686;
}
.hscroll .split-knob {
  width: 5px;
  height: 17px;
  margin-left: auto;
  background: #000;
  box-shadow: inset 2px 0 #999, inset -2px 0 #999, inset 0 4px #999, inset 0 -4px #999;
}
.tabs {
  flex: none;
  height: 22px;
  display: flex;
  align-items: center;
  padding-left: 6px;
}
.nav {
  width: 22px;
  display: grid;
  place-items: center;
}
.nav svg {
  width: 10px;
  height: 14px;
  fill: #9a9a9a;
}
.add {
  width: 34px;
}
.add svg {
  width: 14px;
}
.tab {
  height: 22px;
  padding: 0 14px;
  background: #fff;
  border-bottom: 3px solid #666;
  font-weight: 700;
}
.sidebar {
  flex: none;
  width: 8px;
  display: flex;
  align-items: center;
  border-left: 1px solid #a6a6a6;
}
.sidebar button {
  width: 7px;
  height: 73px;
  background: #666;
  display: grid;
  place-items: center;
}
.sidebar svg {
  width: 5px;
  height: 8px;
}

/* Status bar */
.statusbar {
  flex: none;
  height: 22px;
  display: grid;
  grid-template-columns: 30px 169fr 253fr 267fr 176fr 69px 45px 28px 29px 302fr 143px 50px;
  align-items: center;
  padding-top: 1px;
  border-top: 1px solid #a6a6a6;
}
.statusbar > span {
  height: 17px;
  line-height: 17px;
  padding-left: 8px;
  border-right: 1px solid #c8c8c8;
  white-space: nowrap;
}
.statusbar > span:last-child {
  border-right: 0;
}
.statusbar > .mid {
  padding: 0;
  text-align: center;
}
.doc-state {
  width: 17px;
  height: 17px;
}
.mode svg {
  width: 30px;
  height: 18px;
}
.zoom {
  display: flex;
  align-items: center;
  padding-right: 3px;
}
.zoom button {
  width: 14px;
  font-size: 18px;
  font-weight: 700;
  line-height: 16px;
}
.zoom input {
  flex: 1;
  min-width: 0;
  height: 14px;
  margin: 0 3px;
  appearance: none;
  background: linear-gradient(#777, #777) center / 100% 1px no-repeat;
}
.zoom input::-webkit-slider-thumb {
  appearance: none;
  width: 5px;
  height: 11px;
  background: #efefef;
  border: 1px solid #555;
}
```
